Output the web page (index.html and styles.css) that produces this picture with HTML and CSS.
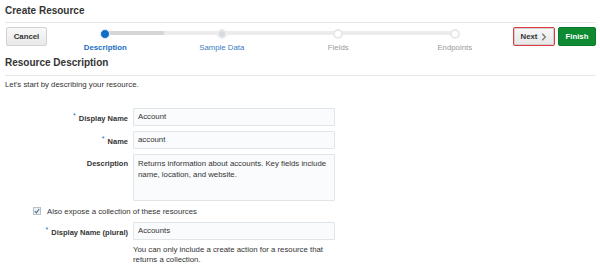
FILE: index.html
```html
<!DOCTYPE html>
<html lang="en">
<head>
<meta charset="utf-8">
<title>Create Resource</title>
<link rel="stylesheet" href="styles.css">
</head>
<body>
<div class="page">
  <div class="title">Create Resource</div>
  <div class="toolbar">
    <button class="btn btn-cancel">Cancel</button>
    <div class="train">
      <div class="stop stop-current">
        <div class="dotrow"><span class="dot"></span></div>
        <div class="stop-label">Description</div>
      </div>
      <div class="stop stop-visited">
        <div class="dotrow"><span class="dot"></span></div>
        <div class="stop-label">Sample Data</div>
      </div>
      <div class="stop stop-unvisited">
        <div class="dotrow"><span class="dot"></span></div>
        <div class="stop-label">Fields</div>
      </div>
      <div class="stop stop-unvisited stop-last">
        <div class="dotrow"><span class="dot"></span></div>
        <div class="stop-label">Endpoints</div>
      </div>
    </div>
    <div class="actions">
      <button class="btn btn-next">Next <svg class="chev" width="6" height="8" viewBox="0 0 6 8"><polyline points="1.2,0.8 4.4,4 1.2,7.2" fill="none" stroke="#777" stroke-width="1.3"/></svg></button>
      <button class="btn btn-finish">Finish</button>
    </div>
  </div>
  <div class="section-title">Resource Description</div>
  <p class="intro">Let's start by describing your resource.</p>
  <div class="form">
    <label class="label"><span class="req">*</span>Display Name</label>
    <div class="input">Account</div>
    <label class="label"><span class="req">*</span>Name</label>
    <div class="input">account</div>
    <label class="label label-top">Description</label>
    <div class="input textarea">Returns information about accounts. Key fields include name, location, and website.</div>
    <div class="check-row">
      <span class="checkbox"><svg width="6" height="6" viewBox="0 0 6 6"><polyline points="0.8,3.2 2.4,4.8 5.2,1" fill="none" stroke="#4a6a8a" stroke-width="1.1"/></svg></span>
      <span>Also expose a collection of these resources</span>
    </div>
    <label class="label"><span class="req">*</span>Display Name (plural)</label>
    <div class="input">Accounts</div>
    <div></div>
    <div class="help">You can only include a create action for a resource that returns a collection.</div>
  </div>
</div>
</body>
</html>
```

FILE: styles.css
```css
* { box-sizing: border-box; }
html, body { margin: 0; background: #fff; }
body {
  font-family: "Liberation Sans", Arial, sans-serif;
  font-size: 7.8px;
  color: #333;
}
.page { padding: 0 4px 0 5px; }
.title {
  height: 23px;
  line-height: 22px;
  font-size: 10px;
  font-weight: bold;
  color: #333;
  border-bottom: 1px solid #e6e9ec;
}
.toolbar {
  display: flex;
  align-items: flex-start;
  padding-top: 4px;
  height: 31px;
}
.btn {
  font-family: "Liberation Sans", Arial, sans-serif;
  font-size: 7.8px;
  font-weight: bold;
  height: 19px;
  border-radius: 2px;
  padding: 0;
  margin: 0;
  cursor: pointer;
}
.btn-cancel {
  width: 41px;
  margin-left: 1px;
  background: linear-gradient(#f8f8f8, #e9e9e9);
  border: 1px solid #d2d2d2;
  color: #333;
}
.train {
  flex: 1;
  display: flex;
}
.stop {
  flex: 1;
  display: flex;
  flex-direction: column;
  align-items: center;
}
.dotrow {
  position: relative;
  width: 100%;
  height: 13px;
  display: flex;
  justify-content: center;
  align-items: center;
}
.dotrow::before, .dotrow::after {
  content: "";
  position: absolute;
  top: 4px;
  height: 4px;
  width: 50%;
  background: #ececec;
}
.dotrow::before { left: 0; }
.dotrow::after { right: 0; }
.stop-current .dotrow::before { display: none; }
.stop-current .dotrow::after { background: #d6d6d6; }
.stop-last .dotrow::after { display: none; }
.dot {
  position: relative;
  z-index: 1;
  width: 10px;
  height: 10px;
  border-radius: 50%;
}
.stop-current .dot { background: #0f6fc6; border: 1px solid #e8eef5; }
.stop-visited .dot { background: #d5dae0; border: 2px solid #ececec; }
.stop-unvisited .dot { background: #fff; border: 2px solid #e8e8e8; }
.stop-label {
  margin-top: 3px;
  line-height: 10px;
  color: #999;
}
.stop-current .stop-label { color: #1a6fbf; font-weight: bold; }
.stop-visited .stop-label { color: #3a7cc4; }
.actions { display: flex; gap: 3px; }
.btn-next {
  width: 42px;
  background: linear-gradient(#f8f8f8, #e6e6e6);
  border: 1px solid #de3a44;
  box-shadow: inset 0 0 0 1px #d0d0d0;
  color: #333;
  display: flex;
  align-items: center;
  justify-content: center;
  gap: 4px;
}
.btn-finish {
  width: 38px;
  background: #0d8a32;
  border: 1px solid #0a7a2a;
  color: #fff;
}
.section-title {
  height: 22px;
  line-height: 18px;
  font-size: 10px;
  font-weight: bold;
  border-bottom: 1px solid #e6e9ec;
}
.intro {
  margin: 0;
  line-height: 18px;
}
.form {
  margin-top: 14px;
  display: grid;
  grid-template-columns: 123px 202px;
  column-gap: 5px;
  row-gap: 5px;
  align-items: center;
}
.label {
  text-align: right;
  font-weight: bold;
  font-size: 7.5px;
  color: #333;
}
.label-top { align-self: start; padding-top: 5px; }
.req {
  color: #1a6fbf;
  font-size: 7px;
  vertical-align: 3px;
  margin-right: 3px;
  font-weight: normal;
}
.input {
  height: 18px;
  line-height: 16px;
  padding: 0 4px;
  border: 1px solid #e0e5ea;
  background: #fafbfd;
  color: #333;
  border-radius: 1px;
}
.textarea {
  height: 47px;
  line-height: 11px;
  padding-top: 3px;
}
.check-row {
  grid-column: 1 / 3;
  display: flex;
  align-items: center;
  gap: 6px;
  padding-left: 28px;
  height: 12px;
  margin-top: -1px;
}
.checkbox {
  width: 8px;
  height: 8px;
  border: 1px solid #b8c0c8;
  background: #eef2f6;
  display: flex;
  align-items: center;
  justify-content: center;
}
.help {
  line-height: 10px;
  margin-top: 0;
}
```
